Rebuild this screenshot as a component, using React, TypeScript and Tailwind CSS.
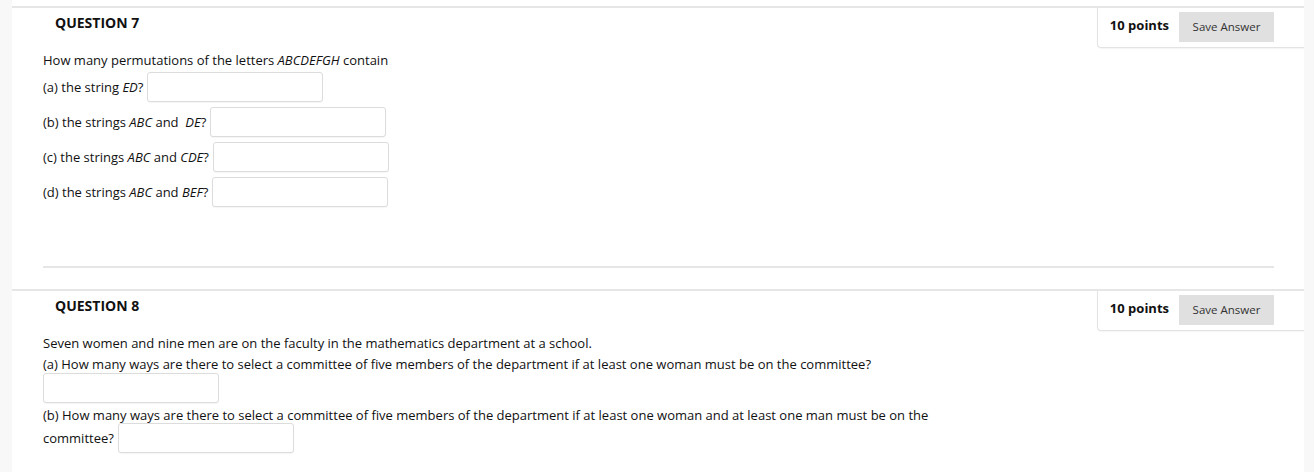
import React from 'react'

const PointsBox = () => (
  <div className="flex h-[40px] items-start border-b border-l border-[#e3e3e3] rounded-bl-[4px] pl-[12px] pr-[30px] shadow-[0_1px_1px_rgba(0,0,0,0.04)]">
    <span className="mt-[7px] text-[13px] font-bold leading-[20px] text-[#111]">10 points</span>
    <button className="ml-[10px] mt-[4px] h-[30px] w-[95px] bg-[#e0e0e0] text-[11.5px] text-[#333]">
      Save Answer
    </button>
  </div>
)

const AnswerBox = ({ className = '' }: { className?: string }) => (
  <input
    type="text"
    className={`h-[30px] w-[176px] rounded-[3px] border border-[#dcdcdc] bg-white shadow-[0_1px_1px_rgba(0,0,0,0.04)] ${className}`}
  />
)

const QuestionHeader = ({ title }: { title: string }) => (
  <div className="flex items-start justify-between border-t-2 border-[#e6e6e6]">
    <h3 className="pl-[43px] pt-[5px] text-[14px] font-bold leading-[20px] text-[#111]">{title}</h3>
    <PointsBox />
  </div>
)

const Row = ({ children }: { children: React.ReactNode }) => (
  <div className="mb-[5px] flex items-center gap-[4px]">
    <span>{children}</span>
    <AnswerBox />
  </div>
)

export default function App() {
  return (
    <div className="flex min-h-[472px] w-full font-['Open_Sans',sans-serif] text-[13px] text-[#111]">
      <div className="w-[12px] shrink-0 bg-[#f8f8f8]" />
      <main className="flex-1 bg-white pt-[6px]">
        {/* Question 7 */}
        <section className="h-[283px]">
          <QuestionHeader title="QUESTION 7" />
          <div className="pl-[31px] pt-[2px] leading-[21px]">
            <p>
              How many permutations of the letters <i>ABCDEFGH</i> contain
            </p>
            <div className="mt-[1px]">
              <Row>
                (a) the string <i>ED</i>?
              </Row>
              <Row>
                (b) the strings <i>ABC</i> and &nbsp;<i>DE</i>?
              </Row>
              <Row>
                (c) the strings <i>ABC</i> and <i>CDE</i>?
              </Row>
              <Row>
                (d) the strings <i>ABC</i> and <i>BEF</i>?
              </Row>
            </div>
          </div>
          <div className="ml-[31px] mr-[30px] mt-[59px] h-[2px] bg-[#e6e6e6]" />
        </section>

        {/* Question 8 */}
        <section>
          <QuestionHeader title="QUESTION 8" />
          <div className="pl-[31px] pt-[2px] leading-[21px]">
            <p>Seven women and nine men are on the faculty in the mathematics department at a school.</p>
            <p>
              (a) How many ways are there to select a committee of five members of the department if at least
              one woman must be on the committee?
            </p>
            <AnswerBox className="-mt-[2px] block" />
            <p className="mt-[2px]">
              (b) How many ways are there to select a committee of five members of the department if at least
              one woman and at least one man must be on the
            </p>
            <div className="-mt-[3px] flex items-center gap-[4px]">
              <span>committee?</span>
              <AnswerBox />
            </div>
          </div>
        </section>
      </main>
      <div className="w-[10px] shrink-0 bg-[#f8f8f8]" />
    </div>
  )
}
